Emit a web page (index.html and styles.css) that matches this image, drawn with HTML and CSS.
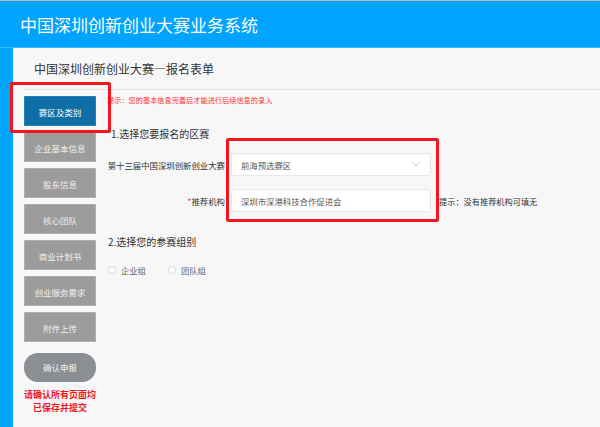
FILE: index.html
```html
<!DOCTYPE html>
<html lang="zh">
<head>
<meta charset="utf-8">
<title>中国深圳创新创业大赛业务系统</title>
<link rel="stylesheet" href="styles.css">
</head>
<body>
<div class="top-line"></div>
<header class="header">中国深圳创新创业大赛业务系统</header>
<div class="main">
  <div class="panel">
    <div class="panel-title">中国深圳创新创业大赛—报名表单</div>
    <div class="panel-body">
      <nav class="nav">
        <div class="nav-btn active">赛区及类别</div>
        <div class="nav-btn">企业基本信息</div>
        <div class="nav-btn">股东信息</div>
        <div class="nav-btn">核心团队</div>
        <div class="nav-btn">商业计划书</div>
        <div class="nav-btn">创业服务需求</div>
        <div class="nav-btn">附件上传</div>
        <div class="confirm-btn">确认申报</div>
        <div class="confirm-note">请确认所有页面均<br>已保存并提交</div>
      </nav>
      <section class="content">
        <div class="tip">提示：您的基本信息完善后才能进行后续信息的录入</div>
        <h2 class="sec-title first">1.选择您要报名的区赛</h2>
        <div class="form-grid">
          <div class="label">第十三届中国深圳创新创业大赛</div>
          <div class="field select">
            <span>前海预选赛区</span>
            <svg class="chev" width="8" height="5" viewBox="0 0 8 5"><path d="M0.5 0.5 L4 4 L7.5 0.5" fill="none" stroke="#c0c0c0" stroke-width="0.9"/></svg>
          </div>
          <div class="hint"></div>
          <div class="label"><span class="star">*</span>推荐机构</div>
          <div class="field"><span>深圳市深港科技合作促进会</span></div>
          <div class="hint">提示：没有推荐机构可填无</div>
        </div>
        <h2 class="sec-title second">2.选择您的参赛组别</h2>
        <div class="radios">
          <label class="radio"><span class="dot"></span>企业组</label>
          <label class="radio"><span class="dot"></span>团队组</label>
        </div>
      </section>
    </div>
  </div>
</div>
<div class="mark mark-nav"></div>
<div class="mark mark-form"></div>
</body>
</html>
```
FILE: styles.css
```css
html, body {
  margin: 0;
  padding: 0;
}
body {
  width: 600px;
  height: 427px;
  overflow: hidden;
  position: relative;
  font-family: "Noto Sans CJK SC", "Noto Sans", sans-serif;
  background: #00a3fe;
  color: #333;
}
.top-line {
  height: 1px;
  background: #b4b8bc;
}
.header {
  height: 47px;
  box-sizing: border-box;
  padding-left: 20px;
  font-size: 17px;
  line-height: 47px;
  color: #fff;
  background: #00a3fe;
  border-bottom: 1px solid #3ab8ff;
}
.main {
  display: flex;
  padding-left: 13px;
  height: 379px;
}
.panel {
  flex: 1;
  background: #f7f7f7;
  display: flex;
  flex-direction: column;
}
.panel-title {
  height: 42px;
  box-sizing: border-box;
  margin-left: 11px;
  padding-left: 10px;
  font-size: 12px;
  line-height: 42px;
  color: #333;
  border-bottom: 1px solid #e1e1e1;
}
.panel-body {
  display: flex;
  padding-left: 11px;
}
.nav {
  width: 72px;
  display: flex;
  flex-direction: column;
  gap: 6px;
  padding-top: 6px;
}
.nav-btn {
  height: 30px;
  line-height: 30px;
  text-align: center;
  font-size: 8.5px;
  color: #f0f0f0;
  background: #9c9c9c;
  border: 1px solid #b0b0b0;
  box-sizing: border-box;
}
.nav-btn.active {
  background: #0f6ea6;
  border-color: #2a80b3;
  color: #fff;
}
.confirm-btn {
  margin-top: 5px;
  height: 29px;
  line-height: 29px;
  border-radius: 14px;
  text-align: center;
  font-size: 8.5px;
  color: #f2f2f2;
  background: #8b8e93;
}
.confirm-note {
  margin-top: 0;
  font-size: 9px;
  line-height: 13px;
  font-weight: bold;
  color: #f5141e;
  text-align: center;
}
.content {
  margin-left: 11px;
  flex: 1;
}
.tip {
  margin-top: 5px;
  font-size: 7.2px;
  line-height: 10px;
  color: #f33;
}
.sec-title {
  margin: 0;
  font-weight: normal;
  font-size: 10px;
  line-height: 14px;
  color: #333;
}
.sec-title.first {
  margin-top: 22px;
  padding-left: 4px;
}
.sec-title.second {
  margin-top: 23px;
  padding-left: 1px;
}
.form-grid {
  margin-top: 12px;
  display: grid;
  grid-template-columns: 118px 200px auto;
  column-gap: 6px;
  row-gap: 13px;
  align-items: center;
}
.label {
  font-size: 8.4px;
  text-align: right;
  color: #333;
  white-space: nowrap;
}
.star {
  color: #f33;
}
.field {
  height: 23px;
  box-sizing: border-box;
  background: #fff;
  border: 1px solid #e8e8e8;
  border-radius: 2px;
  display: flex;
  align-items: center;
  justify-content: space-between;
  padding: 0 10px 0 9px;
  font-size: 8.4px;
  color: #555;
}
.chev {
  display: block;
}
.hint {
  font-size: 8.2px;
  color: #333;
  margin-left: 2px;
}
.radios {
  margin-top: 15px;
  display: flex;
  gap: 22px;
  padding-left: 1px;
}
.radio {
  display: flex;
  align-items: center;
  gap: 5px;
  font-size: 8.3px;
  line-height: 12px;
  color: #666;
}
.dot {
  width: 8px;
  height: 8px;
  border-radius: 50%;
  background: #fff;
  border: 1px solid #dedede;
  box-shadow: 0 0 1px rgba(0, 0, 0, 0.08);
  box-sizing: border-box;
}
.mark {
  position: absolute;
  border: 3px solid #f5141e;
  border-radius: 2px;
  box-sizing: border-box;
}
.mark-nav {
  left: 10px;
  top: 82px;
  width: 101px;
  height: 51px;
}
.mark-form {
  left: 226px;
  top: 138px;
  width: 213px;
  height: 84px;
}
```
